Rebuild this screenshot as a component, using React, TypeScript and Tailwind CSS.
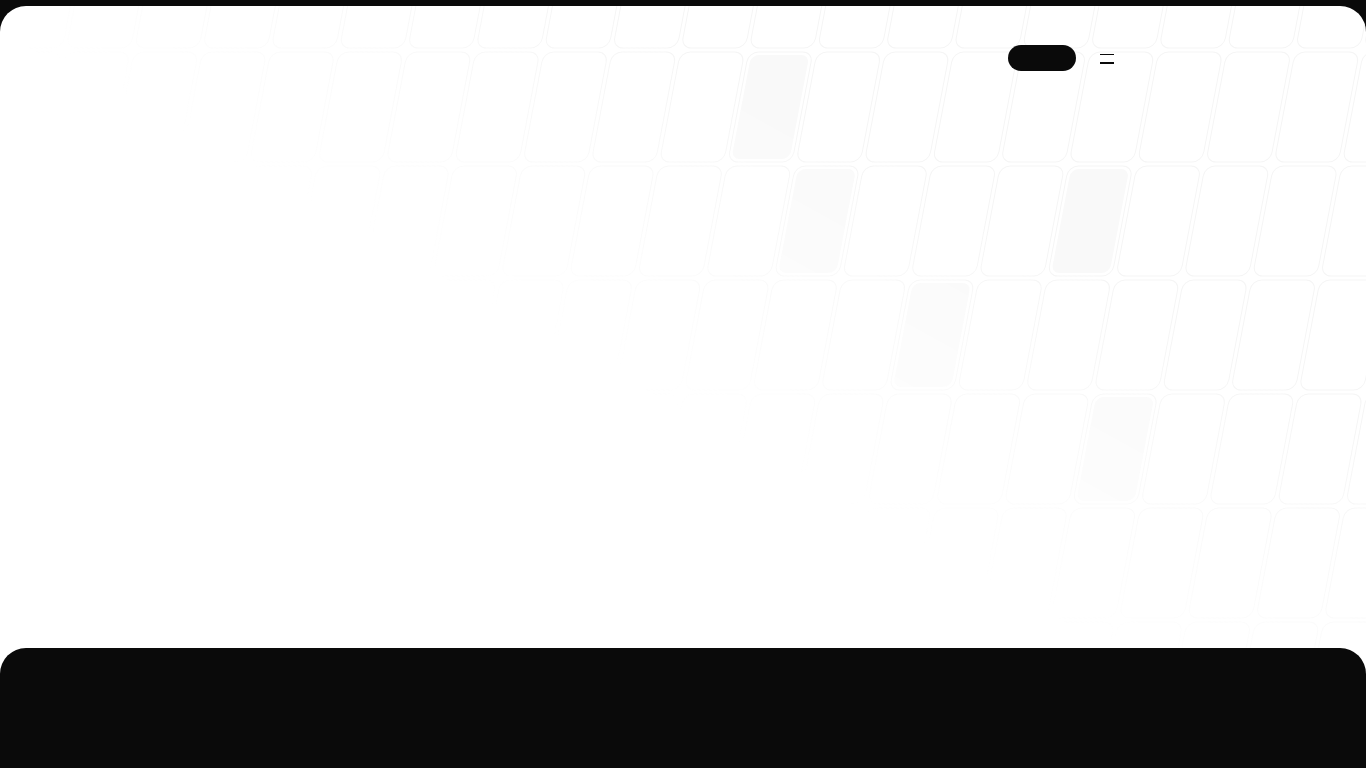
import React from "react";

// skewed tile grid behind the hero
const PITCH_X = 68.3;
const PITCH_Y = 114;
const X0 = 4.1;
const Y0 = -70;

const HIGHLIGHTS = new Set(["1:11", "2:12", "2:16", "3:14", "4:17"]);

function TileGrid() {
  const cells: React.ReactNode[] = [];
  for (let j = 0; j < 7; j++) {
    for (let c = -2; c < 24; c++) {
      const x = X0 + c * PITCH_X;
      const y = Y0 + j * PITCH_Y;
      const lit = HIGHLIGHTS.has(`${j}:${c}`);
      cells.push(
        <g key={`${j}-${c}`}>
          <rect
            x={x + 2}
            y={y + 2}
            width={PITCH_X - 4}
            height={PITCH_Y - 4}
            rx={10}
            fill="none"
            stroke="#f5f5f5"
            strokeWidth={1}
          />
          {lit && (
            <rect
              x={x + 5}
              y={y + 5}
              width={PITCH_X - 10}
              height={PITCH_Y - 10}
              rx={8}
              fill="#f9f9f9"
            />
          )}
        </g>
      );
    }
  }

  return (
    <svg
      className="pointer-events-none absolute inset-0 h-full w-full [mask-image:linear-gradient(29deg,transparent_44%,black_70%)]"
      aria-hidden
    >
      <g transform="skewX(-10.75)">{cells}</g>
    </svg>
  );
}

export default function App() {
  return (
    <div className="h-[768px] overflow-hidden bg-[#0a0a0a] pt-[6px] font-['Inter',sans-serif]">
      <div className="overflow-hidden rounded-t-[26px] bg-white">
        {/* Hero */}
        <section className="relative h-[642px]">
          <TileGrid />
          <header className="relative mx-auto flex max-w-[862px] items-center justify-end gap-6 pt-[39px]">
            <a
              href="#"
              className="block h-[26px] w-[68px] rounded-full bg-[#0a0a0a]"
              aria-label="Get started"
            />
            <button
              type="button"
              className="flex w-[14px] flex-col gap-[7px] pt-[1px]"
              aria-label="Open menu"
            >
              <span className="block h-[1.5px] w-[14px] bg-[#0a0a0a]" />
              <span className="block h-[1.5px] w-[14px] bg-[#0a0a0a]" />
            </button>
          </header>
        </section>

        {/* Dark section */}
        <section className="h-[120px] rounded-t-[26px] bg-[#0a0a0a]" />
      </div>
    </div>
  );
}
